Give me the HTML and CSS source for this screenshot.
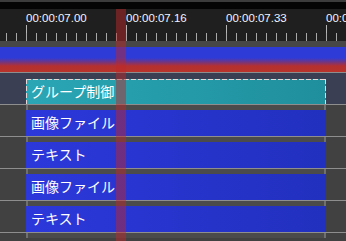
FILE: index.html
```html
<!DOCTYPE html>
<html lang="ja">
<head>
<meta charset="utf-8">
<link rel="stylesheet" href="styles.css">
</head>
<body>
<div class="timeline">
  <div class="topbar"></div>
  <div class="blackbar"></div>
  <div class="ruler">
    <div class="labels">
      <span class="tc">00:00:07.00</span>
      <span class="tc">00:00:07.16</span>
      <span class="tc">00:00:07.33</span>
      <span class="tc">00:00:07.50</span>
    </div>
    <div class="ticks"><div class="minor"></div></div>
  </div>
  <div class="band"></div>
  <div class="layerstrip"></div>
  <div class="row group-row">
    <div class="clip group">グループ制御</div>
  </div>
  <div class="row">
    <div class="gap"></div>
    <div class="clip media">画像ファイル</div>
  </div>
  <div class="row">
    <div class="gap"></div>
    <div class="clip media">テキスト</div>
  </div>
  <div class="row">
    <div class="gap"></div>
    <div class="clip media">画像ファイル</div>
  </div>
  <div class="row">
    <div class="gap"></div>
    <div class="clip media">テキスト</div>
  </div>
  <div class="row">
    <div class="gap"></div>
  </div>
  <div class="playhead"></div>
</div>
</body>
</html>
```
FILE: styles.css
```css
html, body {
  margin: 0;
  padding: 0;
  background: #414141;
  overflow: hidden;
}
.timeline {
  position: relative;
  width: 346px;
  height: 241px;
  overflow: hidden;
  background: #414141;
}
.topbar { height: 2px; background: #3c3c3c; }
.blackbar { height: 7px; background: #050505; }
.ruler {
  height: 32px;
  background: #1f1f1f;
  display: flex;
  flex-direction: column;
  justify-content: space-between;
}
.labels {
  display: flex;
  padding-left: 26px;
  padding-top: 2px;
  white-space: nowrap;
  overflow: hidden;
}
.tc {
  flex: 0 0 100px;
  font-family: "Liberation Sans", Arial, sans-serif;
  font-size: 11.5px;
  line-height: 14px;
  color: #f2f4ff;
}
.ticks {
  height: 16px;
  display: flex;
  flex-direction: column;
  justify-content: flex-end;
  background: repeating-linear-gradient(90deg, #b4b4b4 0 1px, transparent 1px 100px) 26px 0 / 100% 100% no-repeat;
}
.minor {
  height: 8px;
  background: repeating-linear-gradient(90deg, #a8a8a8 0 1px, transparent 1px 10px) 6px 0 / 100% 100% no-repeat;
}
.band { height: 6px; background: #474747; }
.layerstrip {
  height: 25px;
  background: linear-gradient(180deg, #2f3bd6 0, #2f3bd6 11px, #b43030 19px, #b8332a 100%);
}
.row {
  border-top: 1px solid #8e8e8e;
  height: 31px;
  background: #414141;
}
.group-row {
  height: 32px;
  background: #3b3f53;
  padding-top: 6px;
  box-sizing: border-box;
}
.gap {
  margin-left: 26px;
  width: 300px;
  height: 5px;
  background:
    linear-gradient(#707070, #707070) left / 2px 100% no-repeat,
    linear-gradient(#707070, #707070) right / 2px 100% no-repeat,
    #4b4b4b;
}
.clip {
  margin-left: 26px;
  width: 300px;
  height: 26px;
  box-sizing: border-box;
  padding-left: 5px;
  font-family: "Noto Sans CJK JP", "Noto Sans", sans-serif;
  font-size: 14px;
  line-height: 25px;
  color: #ffffff;
  white-space: nowrap;
  overflow: hidden;
}
.media {
  background: linear-gradient(90deg, #2c38da, #2230bf);
}
.group {
  background:
    repeating-linear-gradient(90deg, #e6d6d6 0 5px, transparent 5px 7px) top / 100% 1px no-repeat,
    repeating-linear-gradient(90deg, #e6d6d6 0 5px, transparent 5px 7px) bottom / 100% 1px no-repeat,
    repeating-linear-gradient(180deg, #e6d6d6 0 5px, transparent 5px 7px) left / 1px 100% no-repeat,
    repeating-linear-gradient(180deg, #e6d6d6 0 5px, transparent 5px 7px) right / 1px 100% no-repeat,
    linear-gradient(90deg, #2aa6b4, #1f8f9d);
}
.playhead {
  position: absolute;
  left: 116px;
  top: 9px;
  width: 10px;
  bottom: 0;
  background: rgba(190, 40, 40, 0.48);
  pointer-events: none;
}
```
